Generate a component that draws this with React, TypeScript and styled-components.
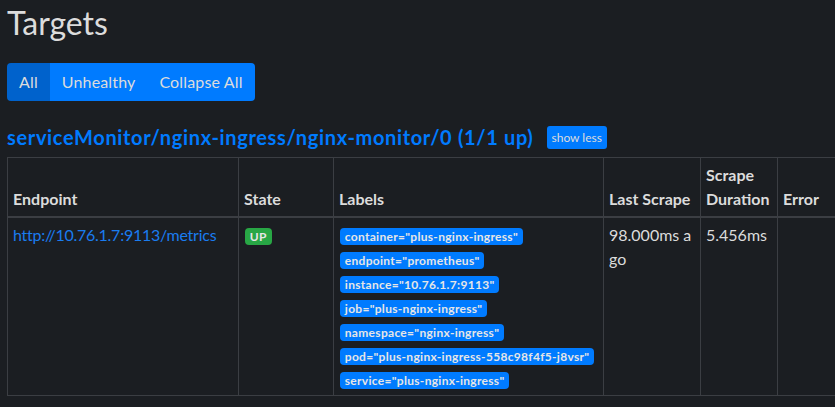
import React from 'react'
import styled, { createGlobalStyle } from 'styled-components'

const GlobalStyle = createGlobalStyle`
  html, body {
    margin: 0;
    padding: 0;
    background: #1b1e22;
    overflow: hidden;
  }
  body {
    font-family: Lato, "Noto Sans", sans-serif;
    font-size: 16px;
    line-height: 1.5;
    color: #dcdcdc;
  }
`

const labels = [
  'container="plus-nginx-ingress"',
  'endpoint="prometheus"',
  'instance="10.76.1.7:9113"',
  'job="plus-nginx-ingress"',
  'namespace="nginx-ingress"',
  'pod="plus-nginx-ingress-558c98f4f5-j8vsr"',
  'service="plus-nginx-ingress"',
]

const App: React.FC = () => {
  return (
    <>
      <GlobalStyle />
      <Page>
        <Title>Targets</Title>
        <ButtonGroup>
          <GroupButton active>All</GroupButton>
          <GroupButton>Unhealthy</GroupButton>
          <GroupButton>Collapse All</GroupButton>
        </ButtonGroup>
        <PoolHeader>
          <PoolLink href="#">serviceMonitor/nginx-ingress/nginx-monitor/0 (1/1 up)</PoolLink>
          <SmallButton>show less</SmallButton>
        </PoolHeader>
        <Table>
          <colgroup>
            <col style={{ width: 231 }} />
            <col style={{ width: 95 }} />
            <col style={{ width: 270 }} />
            <col style={{ width: 97 }} />
            <col style={{ width: 77 }} />
            <col style={{ width: 110 }} />
          </colgroup>
          <thead>
            <tr>
              <Th>Endpoint</Th>
              <Th>State</Th>
              <Th>Labels</Th>
              <Th>Last Scrape</Th>
              <Th>Scrape Duration</Th>
              <Th>Error</Th>
            </tr>
          </thead>
          <tbody>
            <tr>
              <Td>
                <EndpointLink href="#">http://10.76.1.7:9113/metrics</EndpointLink>
              </Td>
              <Td>
                <BadgeStack>
                  <Badge color="#28a745">UP</Badge>
                </BadgeStack>
              </Td>
              <Td>
                <BadgeStack>
                  {labels.map(l => (
                    <Badge key={l} color="#007bff">
                      {l}
                    </Badge>
                  ))}
                </BadgeStack>
              </Td>
              <Td breakAll>98.000ms ago</Td>
              <Td>5.456ms</Td>
              <Td />
            </tr>
          </tbody>
        </Table>
      </Page>
    </>
  )
}

export default App

const Page = styled.div`
  padding: 0 7px;
`

const Title = styled.h2`
  font-size: 32px;
  font-weight: 400;
  line-height: 1.2;
  margin: 4px 0 0;
  color: #dcdcdc;
`

const ButtonGroup = styled.div`
  display: inline-flex;
  margin-top: 21px;
  border-radius: 4px;
  overflow: hidden;
`

const GroupButton = styled.button<{ active?: boolean }>`
  font-family: inherit;
  font-size: 16px;
  line-height: 24px;
  letter-spacing: 0.15px;
  height: 38px;
  padding: 6px 12px;
  border: none;
  color: #dcdcdc;
  background: ${p => (p.active ? '#0062cc' : '#007bff')};
  cursor: pointer;
`

const PoolHeader = styled.div`
  display: flex;
  align-items: center;
  gap: 13px;
  margin-top: 23px;
  height: 26px;
`

const PoolLink = styled.a`
  font-size: 20px;
  font-weight: 700;
  letter-spacing: 0.65px;
  color: #007bff;
  text-decoration: none;
`

const SmallButton = styled.button`
  font-family: inherit;
  font-size: 12px;
  line-height: 17px;
  padding: 3px 5px;
  border: none;
  border-radius: 3px;
  color: #dcdcdc;
  background: #007bff;
`

const Table = styled.table`
  margin-top: 7px;
  border-collapse: collapse;
  table-layout: fixed;
  width: 880px;
`

const Th = styled.th`
  text-align: left;
  vertical-align: bottom;
  font-weight: 700;
  padding: 5px;
  border: 1px solid #3b3e43;
  border-bottom-width: 2px;
`

const Td = styled.td<{ breakAll?: boolean }>`
  vertical-align: top;
  padding: 5px;
  border: 1px solid #3b3e43;
  word-break: ${p => (p.breakAll ? 'break-all' : 'normal')};
`

const EndpointLink = styled.a`
  color: #1a7cf0;
  letter-spacing: -0.25px;
  text-decoration: none;
`

const BadgeStack = styled.div`
  display: flex;
  flex-direction: column;
  align-items: flex-start;
  gap: 7px;
  padding: 5px 0 1px 1px;
`

const Badge = styled.span<{ color: string }>`
  display: inline-block;
  font-size: 12px;
  font-weight: 700;
  line-height: 1;
  letter-spacing: 0.3px;
  padding: 2.5px 4.8px;
  border-radius: 4px;
  color: #e6e6e6;
  background: ${p => p.color};
`
